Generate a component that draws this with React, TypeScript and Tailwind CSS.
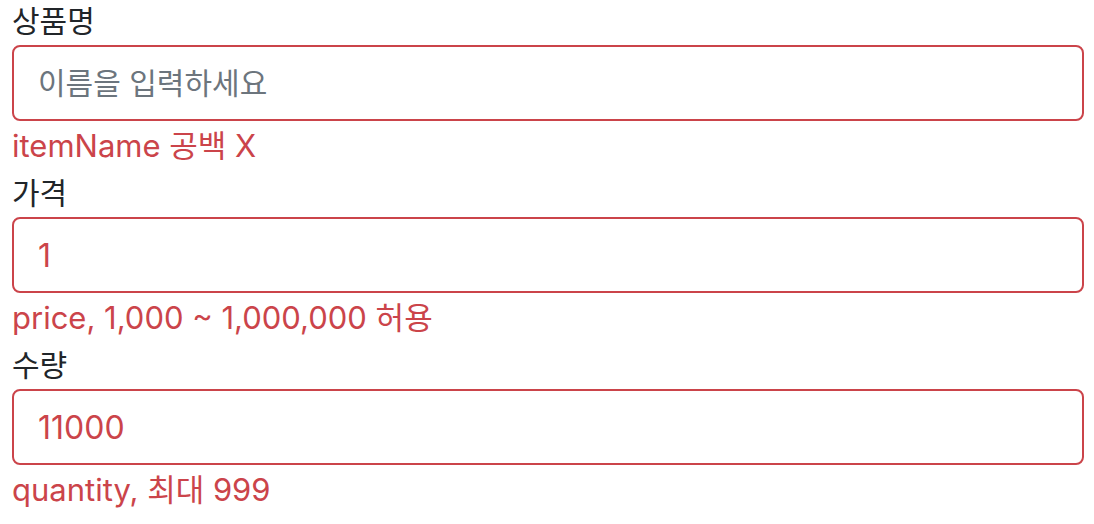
type FieldProps = {
  id: string;
  label: string;
  value?: string;
  placeholder?: string;
  error: string;
};

function Field({ id, label, value, placeholder, error }: FieldProps) {
  return (
    <div>
      <label htmlFor={id} className="block h-[45px] text-[30px] leading-[42px] text-[#212529]">
        {label}
      </label>
      <input
        id={id}
        type="text"
        defaultValue={value}
        placeholder={placeholder}
        aria-invalid="true"
        aria-describedby={`${id}-error`}
        className="block h-[76px] w-full rounded-lg border-2 border-[#cb444a] bg-white px-6 text-[32px] text-[#cb444a] outline-none placeholder:text-[30px] placeholder:text-[#6c757d] placeholder-shown:pb-0.5"
      />
      <p id={`${id}-error`} className="h-[51px] text-[31px] leading-[50px] text-[#cb444a]">
        {error}
      </p>
    </div>
  );
}

export default function App() {
  return (
    <form className="bg-white pr-[10px] pl-3 font-['Inter','Noto_Sans_CJK_KR',sans-serif]">
      <Field id="itemName" label="상품명" placeholder="이름을 입력하세요" error="itemName 공백 X" />
      <Field id="price" label="가격" value="1" placeholder="가격을 입력하세요" error="price, 1,000 ~ 1,000,000 허용" />
      <Field id="quantity" label="수량" value="11000" placeholder="수량을 입력하세요" error="quantity, 최대 999" />
    </form>
  );
}
